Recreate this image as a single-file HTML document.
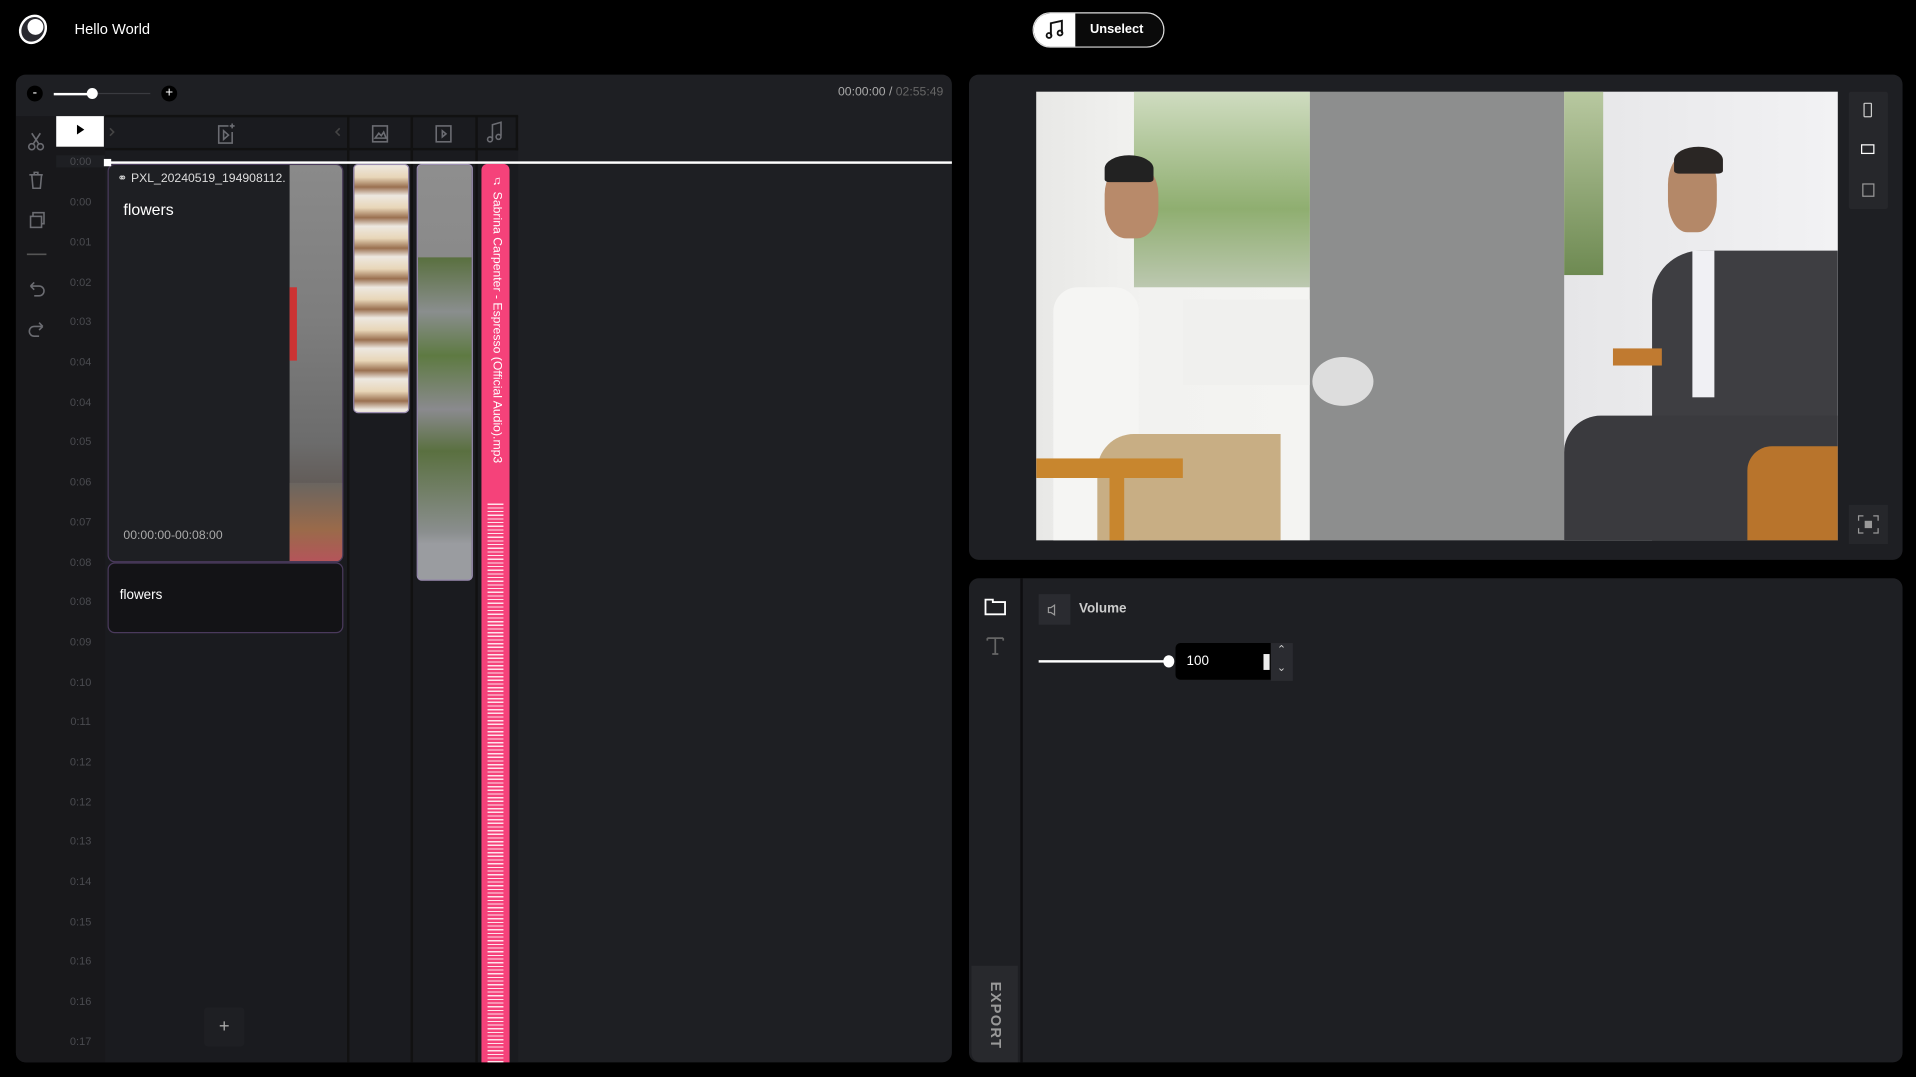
<!DOCTYPE html>
<html><head><meta charset="utf-8"><style>
html,body{margin:0;padding:0;background:#000;width:1916px;height:1077px;overflow:hidden}
#w{position:absolute;left:0;top:0;width:1568px;height:881px;transform:scale(1.22194,1.2225);transform-origin:0 0;font-family:"Liberation Sans",sans-serif;color:#fff}
.a{position:absolute}
.panel{background:#1e1f23;border-radius:8px}
.rl{position:absolute;left:46px;width:40px;text-align:center;font-size:9px;color:#4a4b50}
.ic{stroke:#6b6c72;fill:none;stroke-width:1.3}
</style></head><body><div id="w">
<!-- header -->
<svg class="a" style="left:14px;top:11px" width="28" height="28"><ellipse cx="13" cy="13" rx="10" ry="11.5" transform="rotate(35 13 13)" fill="#2a2a30" stroke="#fff" stroke-width="2"/><circle cx="15" cy="11" r="6.5" fill="#fff"/></svg>
<div class="a" style="left:61px;top:17px;font-size:12px">Hello World</div>
<div class="a" style="left:845px;top:10px;width:106px;height:27px;border:1px solid #ddd;border-radius:15px;overflow:hidden;background:#0a0a0a">
 <div class="a" style="left:0;top:0;width:34px;height:27px;background:#fff"></div>
 <svg class="a" style="left:9px;top:5px" width="17" height="17" viewBox="0 0 17 17"><path d="M5 13V3l9-2v10" stroke="#111" stroke-width="1.6" fill="none"/><circle cx="3.5" cy="13" r="2" stroke="#111" stroke-width="1.5" fill="none"/><circle cx="12.5" cy="11" r="2" stroke="#111" stroke-width="1.5" fill="none"/></svg>
 <div class="a" style="left:46px;top:7px;font-size:10.5px;font-weight:bold">Unselect</div>
</div>

<!-- left panel -->
<div class="a panel" style="left:13px;top:61px;width:766px;height:808px;overflow:hidden">
 <div class="a" style="left:9px;top:9px;width:13px;height:13px;border-radius:50%;background:#000;font-size:11px;line-height:12px;text-align:center">-</div>
 <div class="a" style="left:31px;top:15px;width:33px;height:2px;background:#fff"></div>
 <div class="a" style="left:64px;top:15px;width:46px;height:1px;background:#3a3b40"></div>
 <div class="a" style="left:58px;top:11px;width:9px;height:9px;border-radius:50%;background:#fff"></div>
 <div class="a" style="left:119px;top:9px;width:13px;height:13px;border-radius:50%;background:#000;font-size:11px;line-height:13px;text-align:center">+</div>
 <div class="a" style="right:7px;top:9px;font-size:10px;color:#aaa">00:00:00 / <span style="color:#666">02:55:49</span></div>
 <div class="a" style="left:0;top:34px;width:33px;height:774px;background:#18181b"></div>
 <div class="a" style="left:33px;top:34px;width:40px;height:774px;background:#18181b"></div>
 <div class="a" style="left:73px;top:34px;width:338px;height:774px;background:#1a1b1f"></div>
 <div class="a" style="left:73px;top:33px;width:338px;height:2px;background:#111"></div>
 <div class="a" style="left:73px;top:60px;width:338px;height:2px;background:#111"></div>
 <div class="a" style="left:271px;top:34px;width:2px;height:774px;background:#111"></div>
 <div class="a" style="left:323px;top:34px;width:2px;height:774px;background:#111"></div>
 <div class="a" style="left:376px;top:34px;width:2px;height:774px;background:#111"></div>
 <div class="a" style="left:409px;top:34px;width:2px;height:28px;background:#111"></div>
</div>
<!-- left tool icons -->
<svg class="a" style="left:20px;top:106px" width="20" height="180" viewBox="0 0 20 180">
 <g class="ic"><circle cx="6" cy="14" r="2.5"/><circle cx="13" cy="14" r="2.5"/><path d="M7 12L13 3M12 12L6 3"/>
 <path d="M4 37h11M6 37l1 11h6l1-11M8 37v-2h3v2"/>
 <rect x="5" y="71" width="9" height="9"/><path d="M7 71v-3h9v9h-2"/>
 <path d="M2 102h16" stroke="#555"/>
 <path d="M5 128h7a4 4 0 0 1 0 8H8M5 128l3-3M5 128l3 3"/>
 <path d="M15 161H8a4 4 0 0 0 0 8h4M15 161l-3-3M15 161l-3 3"/></g>
</svg>
<div class="a" style="left:46px;top:95px;width:39px;height:25px;background:#fff"></div>
<div class="a" style="left:63px;top:102px;width:0;height:0;border-left:6px solid #000;border-top:4px solid transparent;border-bottom:4px solid transparent"></div>
<svg class="a" style="left:86px;top:96px" width="340" height="24">
 <g class="ic"><path d="M4 9l3 3-3 3" stroke="#444"/><path d="M192 9l-3 3 3 3" stroke="#444"/>
 <path d="M101 7h-8v14h11v-9" /><path d="M97 11v7l4-3.5z"/><path d="M104 5v4M102 7h4"/>
 <rect x="219" y="7" width="12" height="13"/><path d="M221 17l3-4 2 2 2-3 2 5z"/>
 <rect x="271" y="7" width="12" height="13"/><path d="M276 11v5l3-2.5z"/>
 <path d="M317 18V6l7-2v11"/><circle cx="315" cy="18" r="2"/><circle cx="322" cy="16" r="2"/></g>
</svg>
<!-- ruler -->
<div class="rl" style="top:127px;background:#1e1f23">0:00</div>
<div class="rl" style="top:160px">0:00</div><div class="rl" style="top:193px">0:01</div><div class="rl" style="top:226px">0:02</div><div class="rl" style="top:258px">0:03</div><div class="rl" style="top:291px">0:04</div><div class="rl" style="top:324px">0:04</div><div class="rl" style="top:356px">0:05</div><div class="rl" style="top:389px">0:06</div><div class="rl" style="top:422px">0:07</div><div class="rl" style="top:455px">0:08</div><div class="rl" style="top:487px">0:08</div><div class="rl" style="top:520px">0:09</div><div class="rl" style="top:553px">0:10</div><div class="rl" style="top:585px">0:11</div><div class="rl" style="top:618px">0:12</div><div class="rl" style="top:651px">0:12</div><div class="rl" style="top:683px">0:13</div><div class="rl" style="top:716px">0:14</div><div class="rl" style="top:749px">0:15</div><div class="rl" style="top:781px">0:16</div><div class="rl" style="top:814px">0:16</div><div class="rl" style="top:847px">0:17</div>
<!-- clips -->
<div class="a" style="left:88px;top:134px;width:191px;height:324px;border:1px solid #4a3a5c;border-radius:6px;background:#1e1f23;overflow:hidden">
 <div class="a" style="left:148px;top:0;width:44px;height:324px;background:linear-gradient(#8a8a8a 0,#7d7d7d 40%,#6c6c6c 70%,#5e5550 85%,#8a5a50 100%)"></div>
 <div class="a" style="left:148px;top:100px;width:6px;height:60px;background:#c33"></div>
 <div class="a" style="left:148px;top:260px;width:44px;height:64px;background:linear-gradient(#6a6560,#9a6a4a 60%,#b4555a)"></div>
</div>
<div class="a" style="left:96px;top:141px;font-size:10px;color:#ddd">&#9901; PXL_20240519_194908112.</div>
<div class="a" style="left:101px;top:164px;font-size:13px">flowers</div>
<div class="a" style="left:101px;top:433px;font-size:10px;color:#aaa">00:00:00-00:08:00</div>
<div class="a" style="left:88px;top:460px;width:191px;height:56px;border:1px solid #4a3a5c;border-radius:6px;background:#131316"></div>
<div class="a" style="left:98px;top:481px;font-size:11px">flowers</div>
<div class="a" style="left:289px;top:134px;width:44px;height:202px;border-radius:4px;background:repeating-linear-gradient(#ede8e0 0,#e8d6b8 10px,#9a7050 18px,#ede8e0 25px);border:1px solid #9b8db0"></div>
<div class="a" style="left:341px;top:134px;width:44px;height:339px;border-radius:4px;border:1px solid #9b8db0;background:linear-gradient(#8e8e8e 0,#8a8a8a 75px,#5a7040 76px,#8a8e8e 120px,#5e7a42 156px,#8a8a8e 200px,#5a7040 234px,#8a8e8e 300px,#9a9ca0 310px,#9a9ca0 339px)"></div>
<div class="a" style="left:394px;top:134px;width:23px;height:735px;border-radius:5px 5px 0 0;background:#f5427a"></div>
<div class="a" style="left:399px;top:410px;width:13px;height:459px;background:repeating-linear-gradient(#f5427a 0,#f5427a 2px,#fff 2px,#fff 3px);opacity:.85"></div>
<div class="a" style="left:401px;top:143px;font-size:10px;writing-mode:vertical-rl;white-space:nowrap">&#9835; Sabrina Carpenter - Espresso (Official Audio).mp3</div>
<div class="a" style="left:86px;top:132px;width:693px;height:2px;background:#fff"></div>
<div class="a" style="left:85px;top:130px;width:6px;height:6px;background:#fff"></div>
<div class="a" style="left:167px;top:824px;width:33px;height:32px;background:#1e1f23;border-radius:3px;color:#aaa;font-size:15px;text-align:center;line-height:32px">+</div>

<!-- right top panel -->
<div class="a panel" style="left:793px;top:61px;width:764px;height:397px"></div>
<div class="a" style="left:848px;top:75px;width:224px;height:367px;background:linear-gradient(90deg,#e8e8e6 0,#f2f2f0 40%,#f4f4f2 100%);overflow:hidden">
 <div class="a" style="left:80px;top:0;width:144px;height:160px;background:linear-gradient(#cfdcc0,#8fae70 60%,#bcc8b0)"></div>
 <div class="a" style="left:120px;top:170px;width:104px;height:70px;background:#f0f0ee"></div>
 <div class="a" style="left:14px;top:160px;width:70px;height:207px;background:#f5f5f3;border-radius:20px 20px 0 0"></div>
 <div class="a" style="left:56px;top:60px;width:44px;height:60px;background:#b88a6a;border-radius:40%"></div>
 <div class="a" style="left:56px;top:52px;width:40px;height:22px;background:#222;border-radius:50% 50% 10% 10%"></div>
 <div class="a" style="left:50px;top:280px;width:150px;height:87px;background:#c8ae84;border-radius:30px 0 0 0"></div>
 <div class="a" style="left:0;top:300px;width:120px;height:16px;background:#c8862e"></div>
 <div class="a" style="left:60px;top:316px;width:12px;height:51px;background:#c8862e"></div>
</div>
<div class="a" style="left:1072px;top:75px;width:208px;height:367px;background:#8d8e8e"></div>
<div class="a" style="left:1074px;top:292px;width:50px;height:40px;background:#ddd;border-radius:50%"></div>
<div class="a" style="left:1280px;top:75px;width:224px;height:367px;background:linear-gradient(90deg,#e6e6e8,#f2f2f4);overflow:hidden">
 <div class="a" style="left:0;top:0;width:32px;height:150px;background:linear-gradient(#b8c8a0,#6e8a52)"></div>
 <div class="a" style="left:85px;top:50px;width:40px;height:65px;background:#b48868;border-radius:40%"></div>
 <div class="a" style="left:90px;top:45px;width:40px;height:22px;background:#2a2624;border-radius:50% 50% 10% 10%"></div>
 <div class="a" style="left:72px;top:130px;width:152px;height:237px;background:#3e3e42;border-radius:40px 0 0 0"></div>
 <div class="a" style="left:105px;top:130px;width:18px;height:120px;background:#f0f0f4"></div>
 <div class="a" style="left:0;top:265px;width:224px;height:102px;background:#3a3a3e;border-radius:30px 0 0 0"></div>
 <div class="a" style="left:40px;top:210px;width:40px;height:14px;background:#c07a30"></div>
 <div class="a" style="left:150px;top:290px;width:74px;height:77px;background:#b8742c;border-radius:20px 0 0 0"></div>
</div>
<div class="a" style="left:1513px;top:75px;width:32px;height:96px;background:#26272b;border-radius:2px"></div>
<div class="a" style="left:1525px;top:84px;width:5px;height:10px;border:1px solid #ccc;border-radius:1px"></div>
<div class="a" style="left:1523px;top:118px;width:9px;height:6px;border:1.3px solid #fff"></div>
<div class="a" style="left:1524px;top:150px;width:8px;height:9px;border:1px solid #999"></div>
<div class="a" style="left:1513px;top:413px;width:32px;height:32px;background:#26272b"></div>
<svg class="a" style="left:1520px;top:421px" width="18" height="16"><path d="M1 5V1h4M13 1h4v4M17 11v4h-4M5 15H1v-4" stroke="#999" fill="none"/><rect x="6" y="5" width="6" height="6" fill="#999"/></svg>

<!-- right bottom panel -->
<div class="a panel" style="left:793px;top:473px;width:764px;height:396px;overflow:hidden">
 <div class="a" style="left:42px;top:0;width:2px;height:396px;background:#0d0d0f"></div>
 <div class="a" style="left:2px;top:317px;width:38px;height:79px;background:#28292d;border-radius:0 0 0 8px"></div>
</div>
<svg class="a" style="left:805px;top:488px" width="20" height="50"><path d="M1.5 2.5h6v2h10v10h-16z" stroke="#fff" stroke-width="1.5" fill="none"/><path d="M3 34h13M9.5 34v13M3 34v2M16 34v2M7 47h5" stroke="#666" stroke-width="1.4" fill="none"/></svg>
<div class="a" style="left:808px;top:803px;font-size:12px;font-weight:bold;color:#999;writing-mode:vertical-rl;letter-spacing:1px">EXPORT</div>
<div class="a" style="left:850px;top:486px;width:26px;height:25px;background:#2a2b30"></div>
<svg class="a" style="left:855px;top:492px" width="14" height="14"><path d="M3 5h2l3-2v8l-3-2H3z" stroke="#999" fill="none"/></svg>
<div class="a" style="left:883px;top:492px;font-size:11px;color:#ccc;font-weight:bold">Volume</div>
<div class="a" style="left:850px;top:540px;width:104px;height:2px;background:#fff"></div>
<div class="a" style="left:952px;top:536px;width:9px;height:10px;border-radius:50%;background:#fff"></div>
<div class="a" style="left:962px;top:526px;width:78px;height:30px;background:#000;border-radius:4px 0 0 4px"></div>
<div class="a" style="left:971px;top:535px;font-size:11px">100</div>
<div class="a" style="left:1034px;top:535px;width:5px;height:13px;background:#eee"></div>
<div class="a" style="left:1040px;top:526px;width:18px;height:31px;background:#2a2b30"></div>
<div class="a" style="left:1045px;top:526px;font-size:9px;color:#ccc">&#8963;</div>
<div class="a" style="left:1045px;top:541px;font-size:9px;color:#ccc">&#8964;</div>
</div></body></html>
